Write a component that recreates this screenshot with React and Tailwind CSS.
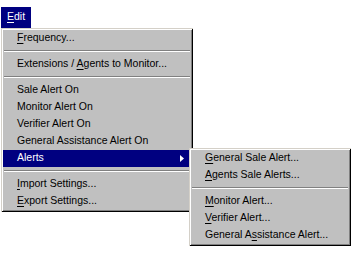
const bevel =
  "shadow-[inset_1px_1px_0_#d4d0c8,inset_-1px_-1px_0_#000,inset_2px_2px_0_#fff,inset_-2px_-2px_0_#808080]";

const U = ({ children }) => (
  <span className="underline decoration-1 underline-offset-[2px]">{children}</span>
);

const Item = ({ children, active, sub }) => (
  <div
    className={`relative h-[17px] flex items-center pl-[14px] pb-[2px] ${
      active ? "bg-[#000080] text-white" : "text-black"
    }`}
  >
    <span className="whitespace-nowrap">{children}</span>
    {active && (
      <svg className="absolute left-[177px] top-[5px]" width="4" height="7" viewBox="0 0 4 7">
        <path d="M0 0 L4 3.5 L0 7 Z" fill="#fff" />
      </svg>
    )}
    {sub}
  </div>
);

const Sep = () => (
  <div className="h-[9px] pt-[3px]">
    <div className="mx-[1px] border-t border-t-[#808080] border-b border-b-white" />
  </div>
);

const AlertsMenu = () => (
  <div
    className={`absolute left-[186px] top-[-2px] w-[162px] bg-[#c0c0c0] p-[2px] text-black ${bevel}`}
  >
    <Item>
      <U>G</U>eneral Sale Alert...
    </Item>
    <Item>
      <U>A</U>gents Sale Alerts...
    </Item>
    <Sep />
    <Item>
      <U>M</U>onitor Alert...
    </Item>
    <Item>
      <U>V</U>erifier Alert...
    </Item>
    <Item>
      General A<U>s</U>sistance Alert...
    </Item>
  </div>
);

export default function App() {
  return (
    <div
      className="w-[351px] h-[262px] bg-white overflow-hidden text-[10.5px] leading-none"
      style={{ fontFamily: '"Liberation Sans", Arial, sans-serif' }}
    >
      <div className="mt-[7px] ml-[1px] w-[30px] h-[21px] bg-[#000080] text-white flex items-center pl-[6px] pb-[2px]">
        <span>
          <U>E</U>dit
        </span>
      </div>
      <div className={`ml-[1px] w-[192px] bg-[#c0c0c0] p-[2px] ${bevel}`}>
        <Item>
          <U>F</U>requency...
        </Item>
        <Sep />
        <Item>
          Extensions / <U>A</U>gents to Monitor...
        </Item>
        <Sep />
        <Item>Sale Alert On</Item>
        <Item>Monitor Alert On</Item>
        <Item>Verifier Alert On</Item>
        <Item>General Assistance Alert On</Item>
        <Item active sub={<AlertsMenu />}>
          Alerts
        </Item>
        <Sep />
        <Item>
          <U>I</U>mport Settings...
        </Item>
        <Item>
          <U>E</U>xport Settings...
        </Item>
      </div>
    </div>
  );
}
